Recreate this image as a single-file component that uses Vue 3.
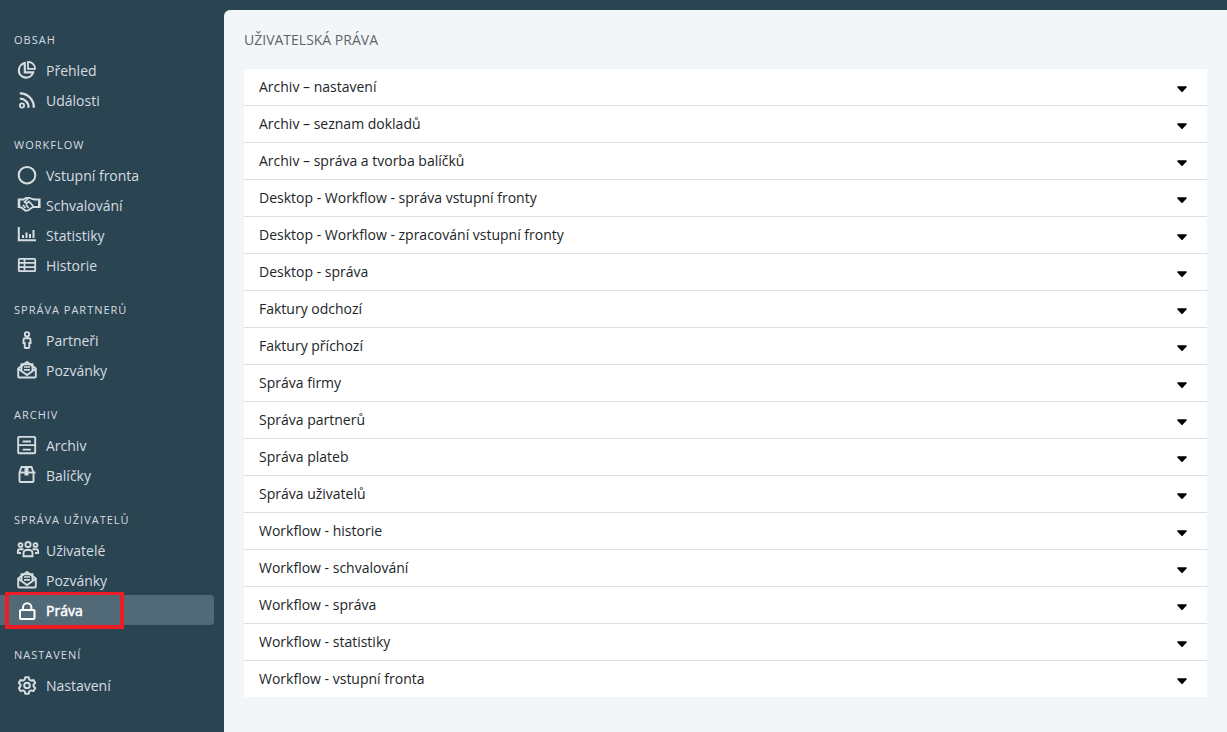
<script setup>
const groups = [
  { title: 'Obsah', items: [['Přehled', 'pie'], ['Události', 'rss']] },
  { title: 'Workflow', items: [['Vstupní fronta', 'circle'], ['Schvalování', 'hands'], ['Statistiky', 'chart'], ['Historie', 'table']] },
  { title: 'Správa partnerů', items: [['Partneři', 'male'], ['Pozvánky', 'mail']] },
  { title: 'Archiv', items: [['Archiv', 'archive'], ['Balíčky', 'box']] },
  { title: 'Správa uživatelů', items: [['Uživatelé', 'users'], ['Pozvánky', 'mail'], ['Práva', 'lock', true]] },
  { title: 'Nastavení', items: [['Nastavení', 'cog']] },
]
const rows = [
  'Archiv – nastavení', 'Archiv – seznam dokladů', 'Archiv – správa a tvorba balíčků',
  'Desktop - Workflow - správa vstupní fronty', 'Desktop - Workflow - zpracování vstupní fronty',
  'Desktop - správa', 'Faktury odchozí', 'Faktury příchozí', 'Správa firmy', 'Správa partnerů',
  'Správa plateb', 'Správa uživatelů', 'Workflow - historie', 'Workflow - schvalování',
  'Workflow - správa', 'Workflow - statistiky', 'Workflow - vstupní fronta',
]
</script>

<template>
  <div class="app">
    <aside class="side">
      <section v-for="g in groups" :key="g.title" class="group">
        <h3 class="label">{{ g.title }}</h3>
        <a v-for="it in g.items" :key="it[0]" class="item" :class="{ active: it[2] }">
          <svg class="ico" viewBox="0 0 20 20" fill="none" stroke="currentColor" stroke-width="2">
            <template v-if="it[1] === 'pie'">
              <path d="M7.800 3.200A7.300 7.300 0 1 0 16.200 12.300H7.800Z" stroke-width="2.200" />
              <path d="M11 1.800a6.800 6.800 0 0 1 7 7.100H11Z" stroke-width="1.800" />
            </template>
            <template v-else-if="it[1] === 'rss'">
              <circle cx="5" cy="15.500" r="2.100" stroke-width="1.800" />
              <path d="M2.800 8.700a8.500 8.500 0 0 1 8.700 9M2.800 3.400a13.800 13.800 0 0 1 14 14.300" stroke-width="2.300" />
            </template>
            <circle v-else-if="it[1] === 'circle'" cx="10" cy="10.200" r="8.300" stroke-width="2" />
            <template v-else-if="it[1] === 'hands'">
              <path d="M.7 3.500h2.600v9.500H.7ZM21 3.500h2.600V13H21Z" fill="currentColor" stroke="none" />
              <path d="M3 4.500h3.500L9 2.800h3.500l2.500 1.200 2.500.5H21M3 12.500h1.500l4 3.200 2.500-.3 5-3.400H21" stroke-width="1.800" />
              <path d="M11.500 3 7.500 7l2 1.500 2.500-2 5 5.500M6 10l2.500 3M9 9.500l2.500 3.500" stroke-width="1.700" />
            </template>
            <template v-else-if="it[1] === 'chart'">
              <path d="M1.800 2v13.300H19" stroke-width="2" />
              <path d="M6 10v3M9.500 7.500V13M13 9v4M16.500 5v8" stroke-width="2" />
            </template>
            <template v-else-if="it[1] === 'table'">
              <rect x="1.800" y="3.800" width="16.400" height="12.400" rx="1" stroke-width="1.800" />
              <path d="M1.800 7.900h16.400M1.800 12.100h16.400M7.500 4v12" stroke-width="1.700" />
            </template>
            <template v-else-if="it[1] === 'male'">
              <circle cx="10" cy="4.300" r="2.200" stroke-width="1.900" />
              <path d="M8 8.200h4a1.500 1.500 0 0 1 1.500 1.500v3.300h-1.200v4a1 1 0 0 1-1 1H8.700a1 1 0 0 1-1-1v-4H6.500V9.700A1.500 1.500 0 0 1 8 8.200Z" stroke-width="1.900" />
            </template>
            <template v-else-if="it[1] === 'mail'">
              <path d="M1.200 8.500V16.500a1 1 0 0 0 1 1h15.600a1 1 0 0 0 1-1V8.500L10 2Z" stroke-width="1.900" />
              <path d="M4.500 11V4.200h11V11M1.500 9l8.500 6 8.500-6" stroke-width="1.900" />
              <path d="M7 7h6M7 9.800h6" stroke-width="1.700" />
            </template>
            <template v-else-if="it[1] === 'archive'">
              <rect x="1.200" y="1.900" width="17" height="16.400" rx="1" stroke-width="1.900" />
              <path d="M1.500 10.100h16.500M6.500 5.500v1h6.500v-1M6.500 13.700v1h6.500v-1" stroke-width="1.800" />
            </template>
            <template v-else-if="it[1] === 'box'">
              <path d="M2 7.500 4 2h10l2 5.500V16a1 1 0 0 1-1 1H3a1 1 0 0 1-1-1Z" transform="translate(.5 0)" stroke-width="1.900" />
              <path d="M2.500 7.500h16" stroke-width="1.900" />
              <path d="M7.500 2h4v8.500h-4Z" fill="currentColor" stroke="none" />
            </template>
            <template v-else-if="it[1] === 'users'">
              <g stroke-width="1.900">
                <circle cx="3.500" cy="5" r="1.900" />
                <circle cx="11" cy="4.600" r="2.600" />
                <circle cx="18.500" cy="5" r="1.900" />
                <path d="M6.500 16.300V13a3 3 0 0 1 3-3h3a3 3 0 0 1 3 3v3.300ZM6.500 9.300H3A2.200 2.200 0 0 0 .9 11.500V13H4M15.500 9.300H19a2.200 2.200 0 0 1 2.100 2.200V13H18" />
              </g>
            </template>
            <template v-else-if="it[1] === 'lock'">
              <rect x="3" y="10" width="14.500" height="9" rx="1" stroke-width="2" />
              <path d="M6 10V7.500a4.200 4.200 0 0 1 8.400 0V10" stroke-width="2" />
            </template>
            <template v-else-if="it[1] === 'cog'">
              <circle cx="10" cy="10.500" r="2.800" stroke-width="2" />
              <path d="M8.300 2.200h3.400l.6 2.400 1.800 1 2.400-.7 1.700 3-1.700 1.800v1.600l1.700 1.800-1.700 3-2.400-.7-1.800 1-.6 2.400H8.300l-.6-2.400-1.800-1-2.400.7-1.700-3 1.700-1.800V9.700L1.800 7.900l1.700-3 2.400.7 1.800-1Z" stroke-width="2" stroke-linejoin="round" />
            </template>
          </svg>
          <span>{{ it[0] }}</span>
        </a>
      </section>
      <div class="mark"></div>
    </aside>
    <main class="main">
      <h1 class="title">Uživatelská práva</h1>
      <ul class="list">
        <li v-for="r in rows" :key="r" class="row">
          <span class="row-text">{{ r }}</span>
          <svg class="caret" viewBox="0 0 10 6" width="10" height="6">
            <path d="M1 .2h8c.7 0 1 .8.6 1.300L5.600 5.700c-.3.4-.9.4-1.200 0L.4 1.500C0 1 .3.200 1 .2Z" fill="#000" />
          </svg>
        </li>
      </ul>
    </main>
  </div>
</template>

<style>
html, body { margin: 0; background: #2a4452; }
</style>

<style scoped>
.app {
  display: flex;
  width: 1227px;
  height: 732px;
  overflow: hidden;
  background: #2a4452;
  font-family: "Open Sans", "Noto Sans", sans-serif;
  font-size: 14px;
  position: relative;
}
.side {
  width: 224px;
  flex: none;
  padding: 30px 10px 0 0;
  box-sizing: border-box;
}
.group { margin-bottom: 20px; }
.label {
  margin: 0 0 5px 14px;
  height: 20px;
  line-height: 20px;
  font-size: 11px;
  font-weight: 400;
  letter-spacing: 1px;
  text-transform: uppercase;
  color: #d6dde1;
}
.item {
  display: flex;
  align-items: center;
  height: 30px;
  padding-left: 17px;
  color: #d6dde1;
  border-radius: 0 4px 4px 0;
}
.ico { width: 20px; height: 20px; flex: none; margin-right: 9px; overflow: visible; }
.active { background: #526a77; color: #fff; }
.active span { -webkit-text-stroke: 0.5px #fff; }
.mark {
  position: absolute;
  left: 5px;
  top: 592px;
  width: 119px;
  height: 37px;
  box-sizing: border-box;
  border: 4px solid #ee1c25;
  border-top-width: 3px;
}
.main {
  flex: 1;
  margin-top: 10px;
  padding: 20px 20px 0;
  background: #f3f6f9;
  border-top-left-radius: 6px;
}
.title {
  margin: 0 0 19px;
  height: 20px;
  line-height: 20px;
  font-size: 14px;
  font-weight: 400;
  text-transform: uppercase;
  color: #5f6468;
}
.list { margin: 0; padding: 0; list-style: none; background: #fff; }
.row {
  display: flex;
  align-items: center;
  justify-content: space-between;
  height: 36px;
  padding: 0 20px 0 15px;
  border-bottom: 1px solid #dcdfe3;
  color: #212529;
}
.row:last-child { border-bottom: 0; }
.row-text { margin-top: -2px; }
.caret { margin-top: 4px; }
</style>
